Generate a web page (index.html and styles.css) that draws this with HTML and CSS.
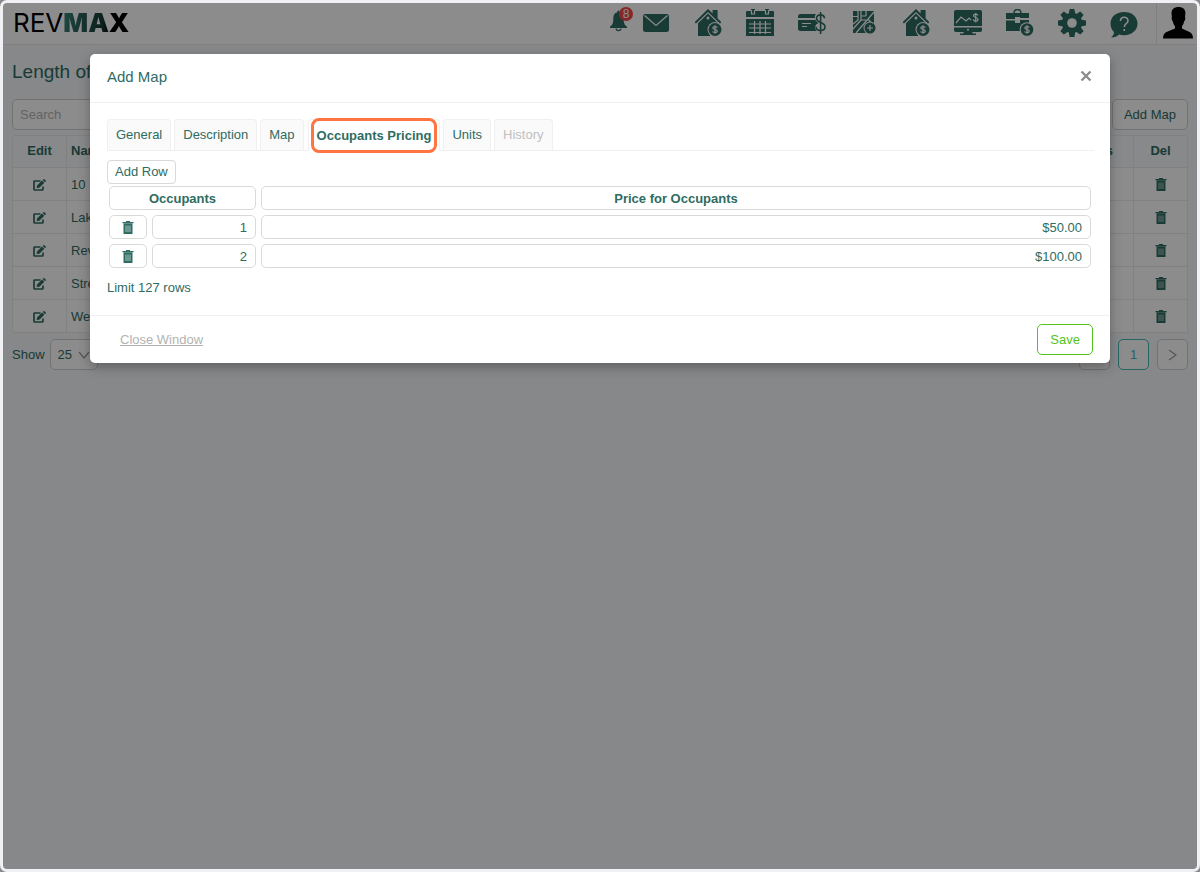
FILE: index.html
```html
<!DOCTYPE html>
<html lang="en">
<head>
<meta charset="utf-8">
<meta name="viewport" content="width=device-width, initial-scale=1">
<title>RevMax</title>
<link rel="stylesheet" href="styles.css">
</head>
<body>
<svg class="sprite" aria-hidden="true">
  <symbol id="house" viewBox="0 0 28 28">
    <path d="M14 0 0.6 13.2l1.4 1.3L14 3l12 11.500 1.400-1.300-3.800-3.700V1h-5v3.500z"/>
    <path d="M14 4.600 4 14.200V27h12.500a8 8 0 0 1 7.500-12.800z"/>
    <circle cx="14" cy="9" r="1.500" class="cut"/>
    <circle cx="21" cy="20.500" r="7.500" class="cut"/>
    <circle cx="21" cy="20.500" r="6.500"/>
    <path d="M23.300 18.600c-.4-1.200-4.500-1.400-4.500.4s4.500 1 4.500 3-4.300 1.900-4.600.3M21 16.300v8.400" class="cut-line"/>
  </symbol>
  <symbol id="trash" viewBox="0 0 12 13">
    <path d="M.5 1H4V0h4v1h3.500v1.300H.5zM1.500 2.500h9V13h-9z"/>
    <path d="M4 4.500v6.500M6 4.500v6.500M8 4.500v6.500" class="cut-line faint"/>
  </symbol>
  <symbol id="edit" viewBox="0 0 13 12">
    <path d="M7.500 2H1.800q-.8 0-.8.8v7.400q0 .8.800.800h7.400q.8 0 .8-.8V7.500" fill="none" stroke="currentColor" stroke-width="1.700"/>
    <path d="M4 6.500 9 1.500l2.300 2.300-5 5L3.700 9.100zM9.700.9l.7-.7q.5-.4 1 0L12.700 1.500q.4.500 0 1l-.7.700z"/>
  </symbol>
</svg>

<div class="frame">
  <header class="topbar">
    <div class="logo">REV<span class="logo-max">MAX</span></div>
    <nav class="tools" aria-label="Main">
      <button class="tool bell" aria-label="Notifications">
        <svg width="17" height="22" viewBox="0 0 18 22"><path d="M9 0q1.300 0 1.300 1.800C13.500 2.600 14.500 5 14.500 8.500c0 5 1 6.500 3.500 8.500v1.500H0V17c2.500-2 3.500-3.500 3.500-8.500 0-3.500 1-5.900 4.200-6.700Q7.700 0 9 0z"/><path d="M6.500 19a2.500 2.200 0 0 0 5 0" fill="none" stroke="currentColor" stroke-width="1.300"/></svg>
        <span class="badge">8</span>
      </button>
      <button class="tool" aria-label="Messages">
        <svg width="26" height="18" viewBox="0 0 26 18"><rect width="26" height="18" rx="2.500"/><path d="m1.500 1.500 11.500 10 11.500-10" class="cut-line"/></svg>
      </button>
      <button class="tool" aria-label="Properties"><svg width="28" height="28"><use href="#house"/></svg></button>
      <button class="tool" aria-label="Calendar">
        <svg width="28" height="28" viewBox="0 0 28 28"><path d="M0 3q0-1 1-1h4V0h4v2h10V0h4v2h4q1 0 1 1v5H0zM0 10h28v17H0z"/><path d="M5.500 1v4h3V1M19.500 1v4h3V1M3 15h22M3 19h22M3 23.500h22M8.500 12v13M14 12v13M19.500 12v13" class="cut-line"/></svg>
      </button>
      <button class="tool" aria-label="Payments">
        <svg width="28" height="24" viewBox="0 0 28 24"><path d="M2.500 3H18q-2 2-1 4H0V5.500Q0 3 2.500 3zM0 9h17.500q1 2 3 3-3 1-3.500 4 0 2 1.500 4h-16Q0 20 0 17.500z"/><path d="M4 12.500h9M4 15.500h5" class="cut-line"/><path d="M26.500 7.200c-.4-4.500-8-4.500-8 0 0 5 8.500 3.400 8.500 8.500 0 5-8.700 5-9 0M22.600 1v22" fill="none" stroke="currentColor" stroke-width="1.600"/></svg>
      </button>
      <button class="tool" aria-label="Maps">
        <svg width="23" height="23" viewBox="0 0 23 23"><path d="M0 0h21v22H0z"/><path d="M0 5.500h5V0M5 5.500V9l-5 4M8 0v9h5M8 5h5M3 22 21 1M15 8l6 7M13 0v5M0 18l8-9" class="cut-line"/><circle cx="17" cy="17" r="6.500" class="cut"/><circle cx="17" cy="17" r="5.500"/><path d="M17 14v6M14 17h6" class="cut-line"/></svg>
      </button>
      <button class="tool" aria-label="Rates"><svg width="28" height="28"><use href="#house"/></svg></button>
      <button class="tool" aria-label="Reports">
        <svg width="28" height="25" viewBox="0 0 28 25"><path d="M2 0h24q2 0 2 2v14H0V2q0-2 2-2zM0 17.500h28V20q0 2-2 2h-8l1 1.500h3V25H6v-1.500h3L10 22H2q-2 0-2-2z"/><path d="m2 13 5-6 5 4 3-3 2 2M23.800 5.500c-.4-2-4.300-1.900-4.300.2 0 2.200 4.500 1.500 4.500 3.700s-4.500 2.200-4.700 0M21.700 3v9.500" class="cut-line"/><circle cx="14" cy="19.700" r="1" class="cut"/></svg>
      </button>
      <button class="tool" aria-label="Accounting">
        <svg width="28" height="27" viewBox="0 0 28 27"><path d="M8 4.500q0-4 3.500-4t3.500 4" fill="none" stroke="currentColor" stroke-width="1.400"/><path d="M0 4h23v5h-9V8H9v2H0zM0 11.500h9V14h5v-3h9v4q-8 0-8 7H0z"/><circle cx="21" cy="20.500" r="7.300" class="cut"/><circle cx="21" cy="20.500" r="6.300"/><path d="M23.300 18.600c-.4-1.200-4.500-1.400-4.500.4s4.500 1 4.500 3-4.300 1.900-4.600.3M21 16.300v8.400" class="cut-line"/></svg>
      </button>
      <button class="tool" aria-label="Settings">
        <svg width="28" height="28" viewBox="-14 -14 28 28"><path id="tooth" d="M-3.200-9.500-2.400-14h4.800l.8 4.500v19L2.400 14h-4.800l-.8-4.500z"/><use href="#tooth" transform="rotate(45)"/><use href="#tooth" transform="rotate(90)"/><use href="#tooth" transform="rotate(135)"/><circle r="10.200"/><circle r="4.800" class="cut"/></svg>
      </button>
      <button class="tool help" aria-label="Help">
        <svg width="28" height="26" viewBox="0 0 28 26"><path d="M14 0C6 0 .5 5 .5 11.500c0 4 1.500 6.500 3.500 8.500 0 2-1 4-3 5.500 4 0 6-1 8-3 1.500.5 3 .7 5 .7 8 0 13.500-5 13.500-11.700S22 0 14 0z"/><path d="M10.500 9c0-5 7.500-5 7.500-.3 0 3-3.700 3-3.700 6.300M14.300 17v2" class="cut-line wide"/></svg>
      </button>
      <button class="tool profile" aria-label="Profile">
        <svg width="30" height="32" viewBox="0 0 30 32"><path d="M15.500 0c-4 0-7 2-7 6.500l.4 3.500c-.8 1 .2 4 1 4.500.4 2 1 3.500 2.100 4.500v2.500L3.500 25Q0 26.500 0 31.500h30q0-5-3.500-6.500L19 21.500V19c1-1 1.700-2.500 2-4.500 1-.5 1.800-3.500 1-4.500l.4-4C22.400 2 19.500 0 15.500 0z"/></svg>
      </button>
    </nav>
  </header>

  <main class="page">
    <h1>Length of</h1>
    <div class="toolbar">
      <input class="search" type="text" placeholder="Search" aria-label="Search">
      <button class="btn">Add Map</button>
    </div>
    <table class="list">
      <thead><tr><th class="action">Edit</th><th class="name">Name</th><th class="units">Units</th><th class="action">Del</th></tr></thead>
      <tbody>
        <tr><td class="action"><button class="icon" aria-label="Edit"><svg width="13" height="12"><use href="#edit"/></svg></button></td><td>10</td><td></td><td class="action"><button class="icon" aria-label="Delete"><svg width="12" height="13"><use href="#trash"/></svg></button></td></tr>
        <tr><td class="action"><button class="icon" aria-label="Edit"><svg width="13" height="12"><use href="#edit"/></svg></button></td><td>Lak</td><td></td><td class="action"><button class="icon" aria-label="Delete"><svg width="12" height="13"><use href="#trash"/></svg></button></td></tr>
        <tr><td class="action"><button class="icon" aria-label="Edit"><svg width="13" height="12"><use href="#edit"/></svg></button></td><td>Rev</td><td></td><td class="action"><button class="icon" aria-label="Delete"><svg width="12" height="13"><use href="#trash"/></svg></button></td></tr>
        <tr><td class="action"><button class="icon" aria-label="Edit"><svg width="13" height="12"><use href="#edit"/></svg></button></td><td>Stre</td><td></td><td class="action"><button class="icon" aria-label="Delete"><svg width="12" height="13"><use href="#trash"/></svg></button></td></tr>
        <tr><td class="action"><button class="icon" aria-label="Edit"><svg width="13" height="12"><use href="#edit"/></svg></button></td><td>We</td><td></td><td class="action"><button class="icon" aria-label="Delete"><svg width="12" height="13"><use href="#trash"/></svg></button></td></tr>
      </tbody>
    </table>
    <div class="pager">
      <label for="size">Show</label>
      <span class="select"><select id="size"><option>25</option></select><svg width="12" height="8" viewBox="0 0 12 8"><path d="m1 1 5 6 5-6"/></svg></span>
      <button class="page-btn first" aria-label="Previous"></button>
      <button class="page-btn current">1</button>
      <button class="page-btn" aria-label="Next"><svg width="9" height="12" viewBox="0 0 9 12"><path d="m1 1 7 5-7 5"/></svg></button>
    </div>
  </main>

  <div class="mask">
    <section class="modal" role="dialog" aria-labelledby="modal-title">
      <header class="modal-head">
        <h2 id="modal-title">Add Map</h2>
        <button class="icon close" aria-label="Close"><svg width="12" height="12" viewBox="0 0 12 12"><path d="m1.500 1.500 9 9m0-9-9 9"/></svg></button>
      </header>
      <div class="modal-body">
        <div class="tabs" role="tablist">
          <button class="tab" role="tab">General</button>
          <button class="tab" role="tab">Description</button>
          <button class="tab" role="tab">Map</button>
          <button class="tab active" role="tab" aria-selected="true">Occupants Pricing</button>
          <button class="tab" role="tab">Units</button>
          <button class="tab" role="tab" disabled>History</button>
        </div>
        <button class="btn small">Add Row</button>
        <table class="pricing">
          <thead><tr><th colspan="2"><div class="cell">Occupants</div></th><th><div class="cell">Price for Occupants</div></th></tr></thead>
          <tbody>
            <tr><td class="del"><button class="field" aria-label="Delete row 1"><svg width="12" height="13"><use href="#trash"/></svg></button></td><td class="count"><input class="field" value="1" aria-label="Occupants, row 1"></td><td><input class="field" value="$50.00" aria-label="Price, row 1"></td></tr>
            <tr><td class="del"><button class="field" aria-label="Delete row 2"><svg width="12" height="13"><use href="#trash"/></svg></button></td><td class="count"><input class="field" value="2" aria-label="Occupants, row 2"></td><td><input class="field" value="$100.00" aria-label="Price, row 2"></td></tr>
          </tbody>
        </table>
        <p class="limit">Limit 127 rows</p>
      </div>
      <footer class="modal-foot">
        <a href="#">Close Window</a>
        <button class="btn save">Save</button>
      </footer>
    </section>
  </div>
</div>
</body>
</html>
```

FILE: styles.css
```css
* { box-sizing: border-box; }
body {
  margin: 0;
  background: #8a8a8c;
  color: #2f6c62;
  font: 13px/20px "Liberation Sans", Arial, sans-serif;
}
button, input, select { font: inherit; color: inherit; margin: 0; }
button { padding: 0; border: 0; background: none; cursor: pointer; }
svg { display: block; fill: currentColor; }
.sprite { position: absolute; width: 0; height: 0; }
.cut { fill: #fff; }
.cut-line { fill: none; stroke: #fff; stroke-width: 1.2; }
.wide { stroke-width: 1.6; }
.faint { stroke-width: 1; stroke-opacity: .6; }

.frame {
  position: relative;
  min-height: 100vh;
  border: 3px solid #f1f0f5;
  border-radius: 7px;
  background: #f5f8fa;
  overflow: hidden;
}

/* top bar */
.topbar {
  display: flex;
  justify-content: space-between;
  align-items: center;
  height: 42px;
  padding-left: 10px;
  background: #fff;
  border-bottom: 1px solid #e8e8e8;
}
.logo { padding-bottom: 2px; font: 400 26px/38px Inter, sans-serif; color: #000; }
.logo-max {
  font-weight: 900;
  background: linear-gradient(100deg, #3b8578, #163a35 60%, #000 75%);
  background-clip: text;
  -webkit-background-clip: text;
  color: transparent;
}
.tools { display: flex; height: 41px; }
.tool { display: flex; align-items: center; justify-content: center; width: 52px; padding-bottom: 2px; }
.bell { position: relative; width: 24px; }
.bell svg { margin-bottom: 3px; }
.badge {
  position: absolute;
  top: 4px;
  right: -3px;
  width: 14px;
  height: 14px;
  border-radius: 7px;
  background: #f5484c;
  color: #fff;
  font-size: 12px;
  line-height: 14px;
}
.help { padding: 3px 0 0; }
.profile { width: 41px; margin-left: 6px; padding: 0 0 2px 2px; border-left: 1px solid #e8e8e8; color: #000; }

/* list page */
.page { padding: 13px 9px; }
h1 { margin: 0 0 13px; font-size: 19px; line-height: 28px; font-weight: 400; }
.toolbar { display: flex; justify-content: space-between; margin-bottom: 5px; }
.search {
  width: 200px;
  height: 31px;
  padding: 0 7px;
  border: 1px solid #d0d0d0;
  border-radius: 5px;
  background: #fff;
}
.search::placeholder { color: #b5b5b5; }
.btn {
  height: 31px;
  padding: 0 11px;
  border: 1px solid #d0d0d0;
  border-radius: 5px;
  background: #fff;
}
.list {
  width: 100%;
  table-layout: fixed;
  border-spacing: 0;
  border: solid #ebebeb;
  border-width: 1px 0 0 1px;
  border-radius: 4px;
  background: #fff;
}
.list th, .list td {
  height: 33px;
  padding: 0 4px;
  border: solid #ebebeb;
  border-width: 0 1px 1px 0;
  text-align: left;
}
.list th { height: 32px; padding-bottom: 1px; background: #f8fafb; }
.list td { height: 33px; padding-top: 1px; }
.list .action { width: 54px; text-align: center; }
.list .units { width: 120px; padding-right: 20px; text-align: right; }
.icon { display: block; margin: 0 auto; width: max-content; }
.pager { display: flex; align-items: center; margin-top: 6px; }
.select { position: relative; margin-left: 5px; }
.select select {
  display: block;
  width: 48px;
  height: 31px;
  padding: 0 7px;
  border: 1px solid #d0d0d0;
  border-radius: 5px;
  background: #fff;
  appearance: none;
}
.select svg { position: absolute; right: 8px; top: 12px; pointer-events: none; }
.select path, .page-btn path { fill: none; stroke: #999; stroke-width: 1.2; }
.page-btn {
  display: flex;
  align-items: center;
  justify-content: center;
  width: 31px;
  height: 31px;
  margin-left: 8px;
  border: 1px solid #d0d0d0;
  border-radius: 5px;
  background: #fff;
}
.first { margin-left: auto; }
.current { border-color: #46b8b0; color: #46b8b0; }

/* dialog */
.mask {
  position: absolute;
  inset: 0;
  padding: 51px 87px;
  background: rgba(0, 0, 0, .45);
}
.modal {
  border-radius: 5px;
  background: #fff;
  box-shadow: 0 4px 12px rgba(0, 0, 0, .3);
}
.modal-head {
  display: flex;
  align-items: center;
  justify-content: space-between;
  height: 49px;
  padding: 0 18px 5px 17px;
  border-bottom: 1px solid #f0f0f0;
}
h2 { margin: 3px 0 0; font-size: 15px; font-weight: 400; }
.close { margin: 0; }
.close path { fill: none; stroke: #8c8c8c; stroke-width: 2.4; }
.modal-body { padding: 16px 16px 17px 17px; }
.tabs { display: flex; gap: 3px; margin-bottom: 9px; border-bottom: 1px solid #f0f0f0; }
.tab {
  height: 31px;
  padding: 0 8px;
  border: 1px solid #f0f0f0;
  border-bottom: 0;
  border-radius: 4px 4px 0 0;
  background: #fafafa;
}
.tab:disabled { color: #bfbfbf; }
.tab.active { position: relative; height: 32px; margin: 0 0 -1px 1px; background: #fff; font-weight: 700; }
.tab.active::after {
  content: "";
  position: absolute;
  inset: -2px 2px -2px 2px;
  border: 3px solid #ff7442;
  border-radius: 8px;
}
.small { display: block; height: 24px; padding: 0 7px; border-color: #d9d9d9; border-radius: 4px; }
.pricing { width: 100%; border-spacing: 0; table-layout: auto; }
.pricing th, .pricing td { padding: 2px 3px 3px 2px; }
.cell, .field {
  display: block;
  width: 100%;
  height: 24px;
  border: 1px solid #d9d9d9;
  border-radius: 5px;
  background: #fff;
}
.cell { line-height: 23px; }
.field { padding: 0 8px; text-align: right; }
.field svg { margin: auto; }
.del { width: 43px; }
.del .field { padding: 0; }
.count { width: 109px; }
.limit { margin: 7px 0 0; }
.modal-foot {
  display: flex;
  align-items: center;
  justify-content: space-between;
  padding: 8px 17px 8px 30px;
  border-top: 1px solid #f0f0f0;
}
.modal-foot a { color: #b3b3b3; }
.save { padding: 0 12px; border-color: #52c41a; color: #52c41a; }
```
